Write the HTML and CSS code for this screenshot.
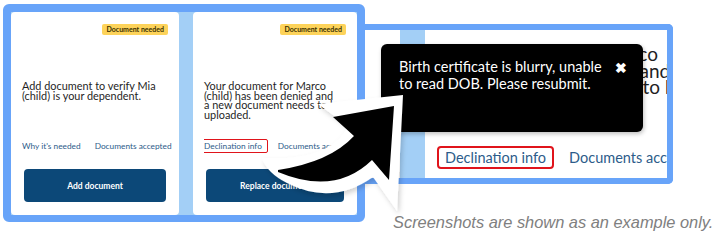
FILE: index.html
```html
<!DOCTYPE html>
<html lang="en">
<head>
    <meta charset="UTF-8">
    <meta name="viewport" content="width=device-width, initial-scale=1.0">
    <title>Dependent documents</title>
    <link rel="stylesheet" href="styles.css">
</head>
<body>
    <div class="page">
        <div class="left">
            <div class="frame">
                <div class="card card-first">
                    <span class="badge">Document needed</span>
                    <p class="desc">Add document to verify Mia (child) is your dependent.</p>
                    <div class="links">
                        <a class="link">Why it's needed</a>
                        <a class="link">Documents accepted</a>
                    </div>
                    <button type="button" class="btn">Add document</button>
                </div>
                <div class="card">
                    <span class="badge">Document needed</span>
                    <p class="desc">Your document for Marco<br>(child) has been denied and<br>a new document needs to be<br>uploaded.</p>
                    <div class="links">
                        <a class="link marked">Declination info</a>
                        <a class="link">Documents accepted</a>
                    </div>
                    <button type="button" class="btn">Replace document</button>
                </div>
            </div>
            <div class="under">Dependent documents</div>
        </div>

        <div class="right">
            <div class="zoom">
                <div class="zoom-edge"></div>
                <div class="zoom-gap"></div>
                <div class="zoom-card">
                    <p class="zoom-desc">Your document for Marco<br>(child) has been denied and<br>a new document needs to be<br>uploaded.</p>
                    <div class="zoom-links">
                        <a class="zoom-link marked-big">Declination info</a>
                        <a class="zoom-link">Documents accepted</a>
                    </div>
                </div>
                <div class="tooltip">
                    <p class="tooltip-text">Birth certificate is blurry, unable to read DOB. Please resubmit.</p>
                    <span class="tooltip-close">&#10006;</span>
                </div>
            </div>
            <p class="caption">Screenshots are shown as an example only.</p>
        </div>
    </div>

    <svg class="arrow" width="720" height="240" viewBox="0 0 720 240">
        <defs>
            <filter id="soft" x="-20%" y="-20%" width="140%" height="140%">
                <feDropShadow dx="2" dy="3" stdDeviation="2.5" flood-color="#000" flood-opacity="0.18"/>
            </filter>
        </defs>
        <path d="M 262 158 C 300 160 336 153 348 126 L 318 104 L 403 95 L 397 211 L 373 177 Q 332 206 287 183 Q 267 173 262 158 Z" fill="#fff" filter="url(#soft)"/>
        <path d="M 278 170 Q 330 162 354 136 L 333 117 L 394 106 L 389 180 L 372 160 Q 335 196 278 172 Z" fill="#000"/>
    </svg>
</body>
</html>
```

FILE: styles.css
```css
* {
    box-sizing: border-box;
}

body {
    margin: 0;
    width: 720px;
    height: 240px;
    overflow: hidden;
    position: relative;
    background-color: #fff;
    font-family: Lato, 'Noto Sans', sans-serif;
}

p {
    margin: 0;
}

.page {
    display: flex;
    padding: 4px 0 0 3px;
}

/* left: the two cards */
.frame {
    display: flex;
    gap: 14px;
    width: 362px;
    height: 218px;
    border: 8px solid #68a4f9;
    border-bottom-width: 7px;
    border-radius: 6px;
    background-color: #a3cff6;
}

.card {
    flex: 1;
    min-width: 0;
    display: flex;
    flex-direction: column;
    padding: 12px 11px 13px 11px;
    background-color: #fff;
    border-radius: 4px;
}

.card-first {
    flex: 0 0 168px;
}

.badge {
    align-self: flex-end;
    height: 11px;
    padding: 0 4px;
    line-height: 11px;
    font-size: 7px;
    font-weight: 700;
    color: #3b3000;
    background-color: #fdd35a;
    border-radius: 2px;
}

.desc {
    height: 57px;
    margin-top: 46px;
    font-size: 10.9px;
    line-height: 9.7px;
    color: #1f1f1f;
    white-space: nowrap;
}

.card-first .desc {
    white-space: normal;
}

.links {
    display: flex;
    align-items: center;
    gap: 14px;
    height: 15px;
    margin-right: -8px;
    white-space: nowrap;
    overflow: hidden;
}

.link {
    flex-shrink: 0;
    font-size: 8.3px;
    color: #2d5c8a;
}

.marked {
    margin-left: -5px;
    margin-right: -4px;
    padding: 1px 5px 1px 4px;
    border: 1.5px solid #e0141b;
    border-radius: 2px;
}

.btn {
    flex-shrink: 0;
    height: 33px;
    margin: 16px 2px 0 2px;
    border: none;
    border-radius: 4px;
    background-color: #0c4878;
    color: #fff;
    font-family: Lato, sans-serif;
    font-size: 8.5px;
    font-weight: 700;
}

.under {
    margin-top: 14px;
    font-size: 15px;
    font-weight: 700;
    color: #e8e8e8;
}

/* right: the zoomed view */
.right {
    display: flex;
    flex-direction: column;
}

.zoom {
    position: relative;
    display: flex;
    width: 308px;
    height: 160px;
    margin-top: 20px;
    border: 6px solid #68a4f9;
    border-left: none;
    border-radius: 0 5px 5px 0;
    background-color: #fff;
}

.zoom-edge {
    flex: 0 0 35px;
}

.zoom-gap {
    flex: 0 0 25px;
    background-color: #a3cff6;
}

.zoom-card {
    flex: 1;
    min-width: 0;
    overflow: hidden;
    padding-left: 20px;
    white-space: nowrap;
}

.zoom-desc {
    height: 116px;
    padding-top: 16px;
    font-size: 19px;
    line-height: 16.5px;
    color: #1f1f1f;
}

.zoom-links {
    display: flex;
    align-items: center;
    gap: 15px;
    height: 23px;
}

.zoom-link {
    flex-shrink: 0;
    font-size: 14.5px;
    color: #2d5c8a;
}

.marked-big {
    margin-left: -8px;
    padding: 1px 6px;
    border: 2.5px solid #e0141b;
    border-radius: 4px;
}

.tooltip {
    position: absolute;
    left: 16px;
    top: 14px;
    display: flex;
    align-items: flex-start;
    width: 262px;
    height: 88px;
    padding: 14px 16px 0 18px;
    background-color: #000;
    border-radius: 6px;
    box-shadow: 1px 2px 4px rgba(0, 0, 0, 0.25);
    color: #fff;
}

.tooltip-text {
    flex: 1;
    font-size: 14.5px;
    line-height: 17px;
}

.tooltip-close {
    margin-top: 3px;
    font-size: 14px;
    font-weight: 700;
    line-height: 14px;
}

.caption {
    margin: 29px 0 0 28px;
    font-family: 'Liberation Sans', Arial, sans-serif;
    font-style: italic;
    font-size: 16.4px;
    color: #808080;
    white-space: nowrap;
}

.arrow {
    position: absolute;
    left: 0;
    top: 0;
    pointer-events: none;
}
```
